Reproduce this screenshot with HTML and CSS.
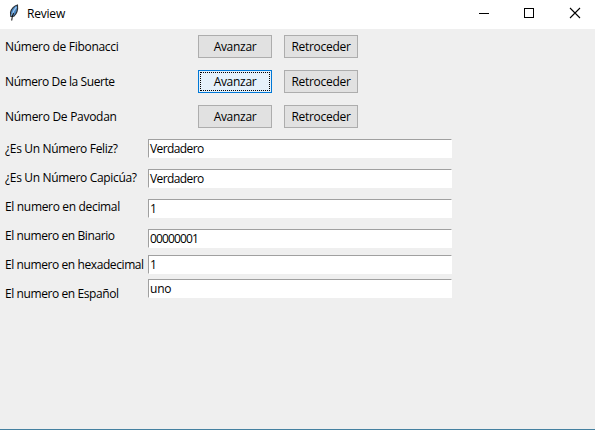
FILE: index.html
```html
<!DOCTYPE html>
<html lang="es">
<head>
<meta charset="utf-8">
<title>Review</title>
<link rel="stylesheet" href="styles.css">
</head>
<body>
<div class="window">
  <header class="titlebar">
    <svg class="feather" width="10" height="17" viewBox="0 0 10 17">
      <path d="M8.500 1C5.500 1.500 2 5 1.500 8.500L1.800 12.500 4.800 12.300C8 9.500 9 5 8.500 1Z" fill="#4a87c2" stroke="#2d3136" stroke-width="1.100"/>
      <path d="M7.400 3C5 5.500 3.900 8 2.800 11.500" fill="none" stroke="#a0c8f0" stroke-width="1.200"/>
      <path d="M4.500 9C3.600 11 3 13 2.700 16.500" fill="none" stroke="#111" stroke-width="1.100"/>
    </svg>
    <span class="title">Review</span>
    <div class="controls">
      <svg width="46" height="28" viewBox="0 0 46 28"><path d="M18 13.5h10" stroke="#000"/></svg>
      <svg width="46" height="28" viewBox="0 0 46 28"><rect x="17.500" y="8.500" width="9" height="9" fill="none" stroke="#000"/></svg>
      <svg width="46" height="28" viewBox="0 0 46 28"><path d="M17 8l10 10M27 8l-10 10" fill="none" stroke="#000" stroke-width="1.100"/></svg>
    </div>
  </header>
  <main>
    <section class="series">
      <div class="row"><span class="label">Número de Fibonacci</span><button>Avanzar</button><button>Retroceder</button></div>
      <div class="row"><span class="label tight">Número De la Suerte</span><button class="focused">Avanzar</button><button>Retroceder</button></div>
      <div class="row"><span class="label">Número De Pavodan</span><button>Avanzar</button><button>Retroceder</button></div>
    </section>
    <section class="details">
      <div class="names">
        <span>¿Es Un Número Feliz?</span>
        <span>¿Es Un Número Capicúa?</span>
        <span>El numero en decimal</span>
        <span class="tight">El numero en Binario</span>
        <span class="tight">El numero en hexadecimal</span>
        <span class="tight">El numero en Español</span>
      </div>
      <div class="fields">
        <div class="field">Verdadero</div>
        <div class="field">Verdadero</div>
        <div class="field">1</div>
        <div class="field digits">00000001</div>
        <div class="field near">1</div>
        <div class="field nearest">uno</div>
      </div>
    </section>
  </main>
</div>
</body>
</html>
```
FILE: styles.css
```css
* { box-sizing: border-box; }
body {
  margin: 0;
  overflow: hidden;
  color: #000;
  font: 12px/16px "Open Sans", "Noto Sans", sans-serif;
  letter-spacing: -0.33px;
  white-space: nowrap;
}
.window {
  display: flex;
  flex-direction: column;
  width: 595px;
  height: 430px;
  background: #efefef;
  border-bottom: 1px solid #4480a0;
}
.titlebar {
  display: flex;
  height: 29px;
  padding-left: 9px;
  background: #fff;
}
.feather { margin-top: 4px; }
.title { margin: 6px 0 0 8px; letter-spacing: -0.2px; }
.controls { display: flex; margin-left: auto; margin-right: -4px; }
.series {
  display: flex;
  flex-direction: column;
  gap: 12px;
  padding: 6px 0 0 5px;
}
.row { display: flex; align-items: center; height: 23px; }
.label { width: 193px; letter-spacing: -0.29px; }
.tight { letter-spacing: -0.41px; }
button {
  width: 74px;
  height: 23px;
  margin-right: 12px;
  padding: 0;
  border: 1px solid #adadad;
  background: #e1e1e1;
  color: inherit;
  font: inherit;
  letter-spacing: -0.3px;
}
.focused {
  border-color: #0078d7;
  background: #e5f1fb;
  outline: 1px dotted #000;
  outline-offset: -3px;
}
.details { display: flex; padding: 6px 0 0 5px; }
.names { display: flex; flex-direction: column; width: 143px; }
.names span { height: 29px; line-height: 29px; }
.fields { padding-top: 5px; letter-spacing: -0.6px; }
.field {
  width: 304px;
  height: 19px;
  margin-bottom: 11px;
  padding-left: 1px;
  border: 1px solid #fff;
  border-top-color: #a0a0a0;
  border-left-color: #a0a0a0;
  background: #fff;
  line-height: 18px;
}
.digits { letter-spacing: -0.85px; }
.near { margin-top: -4px; }
.nearest { margin-top: -6px; letter-spacing: -0.2px; }
.controls svg { transform: translateX(0); }
```
